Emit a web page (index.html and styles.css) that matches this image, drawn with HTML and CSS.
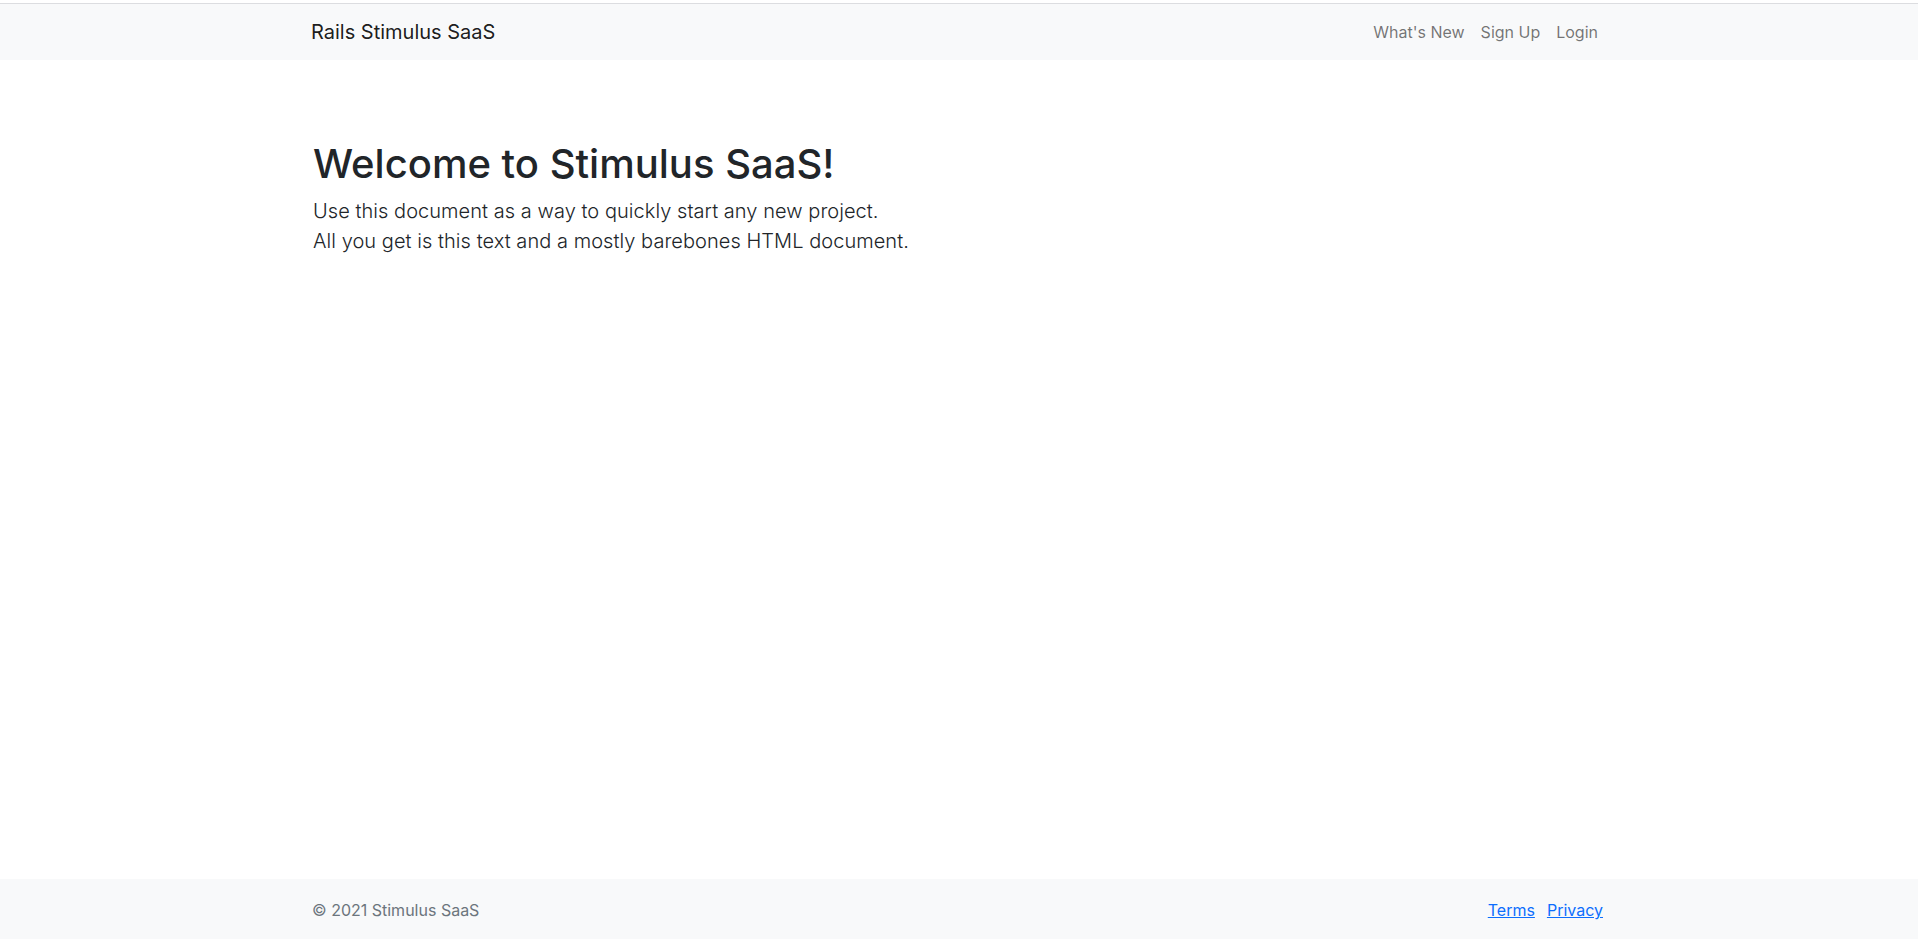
FILE: index.html
```html
<!DOCTYPE html>
<html lang="en">
<head>
<meta charset="utf-8">
<title>Rails Stimulus SaaS</title>
<link rel="stylesheet" href="styles.css">
</head>
<body>
<div class="page">
  <nav class="navbar">
    <div class="container nav-inner">
      <a class="brand" href="#">Rails Stimulus SaaS</a>
      <ul class="nav-links">
        <li><a href="#">What's New</a></li>
        <li><a href="#">Sign Up</a></li>
        <li><a href="#">Login</a></li>
      </ul>
    </div>
  </nav>
  <main class="main">
    <div class="container content">
      <h1 class="title">Welcome to Stimulus SaaS!</h1>
      <p class="lead">Use this document as a way to quickly start any new project.<br>All you get is this text and a mostly barebones HTML document.</p>
    </div>
  </main>
  <footer class="footer">
    <div class="container footer-inner">
      <span class="copy">© 2021 Stimulus SaaS</span>
      <div class="footer-links">
        <a href="#">Terms</a>
        <a href="#">Privacy</a>
      </div>
    </div>
  </footer>
</div>
</body>
</html>
```
FILE: styles.css
```css
* { box-sizing: border-box; }
html, body { margin: 0; padding: 0; }
body {
  font-family: Inter, "Noto Sans", sans-serif;
  font-size: 16px;
  line-height: 1.5;
  color: #212529;
  background: #fff;
}
.page {
  min-height: 100vh;
  display: flex;
  flex-direction: column;
  padding-top: 3px;
}
.container {
  width: 1320px;
  margin: 0 auto;
  padding: 0 12px;
}
.navbar {
  background: #f8f9fa;
  border-top: 1px solid #dcdde0;
  padding: 8px 0;
}
.nav-inner {
  display: flex;
  align-items: center;
  justify-content: space-between;
}
.brand {
  font-size: 20px;
  line-height: 30px;
  padding: 5px 0;
  color: rgba(0,0,0,.9);
  text-decoration: none;
}
.nav-links {
  list-style: none;
  margin: 0;
  padding: 0;
  display: flex;
}
.nav-links a {
  display: block;
  padding: 8px;
  color: rgba(0,0,0,.55);
  text-decoration: none;
}
.nav-links li:last-child a { padding-right: 9px; }
.main {
  flex: 1;
  padding-top: 80px;
}
.content {
  padding-left: 14px;
}
.title {
  font-size: 40px;
  font-weight: 500;
  line-height: 1.2;
  margin: 0 0 8px;
}
.lead {
  font-size: 20px;
  font-weight: 300;
  line-height: 30px;
  margin: 0;
  color: #212529;
  letter-spacing: 0.05px;
}
.footer {
  background: #f8f9fa;
  padding: 19px 0 17px;
}
.footer-inner {
  display: flex;
  justify-content: space-between;
  align-items: center;
}
.copy {
  color: #6c757d;
  padding-left: 1px;
}
.footer-links {
  display: flex;
  gap: 12px;
  padding-right: 4px;
}
.footer-links a {
  color: #0d6efd;
  text-decoration: underline;
}
```
